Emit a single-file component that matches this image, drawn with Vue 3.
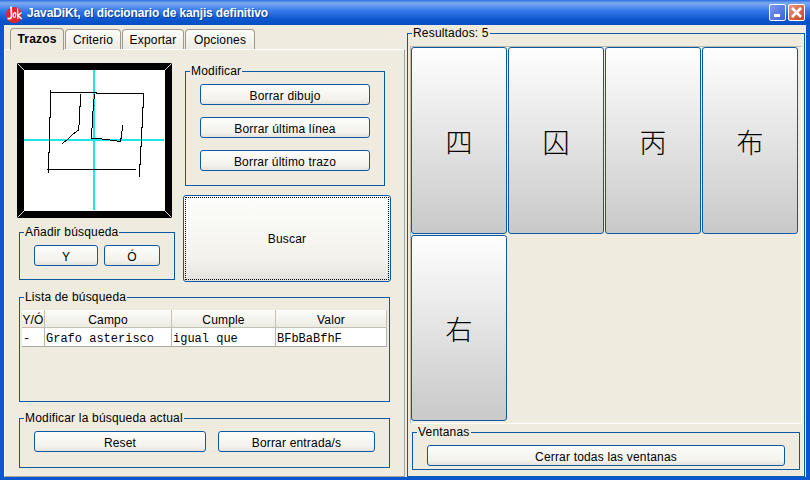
<template>
  <div class="window">
    <header class="titlebar">
      <svg class="logo" width="18" height="18" viewBox="0 0 18 18">
        <circle cx="9" cy="9" r="8" fill="#e8232f" />
        <path d="M6 0.5 L6.6 9.5 Q6.6 13.5 2.5 12.5" fill="none" stroke="#fff" stroke-width="1.7" />
        <path d="M10 6.5 Q8 7 8.2 10 Q8.6 12 10.2 11 Q11.2 9.5 10.6 7 Z" fill="none" stroke="#fff" stroke-width="1.1" />
        <path d="M12.6 2.5 L12.8 13 M16.5 6.5 L13 9.5 L16.8 13" fill="none" stroke="#fff" stroke-width="1.3" />
      </svg>
      <span class="title">JavaDiKt, el diccionario de kanjis definitivo</span>
      <div class="winbtn min"><span class="dash"></span></div>
      <div class="winbtn close">
        <svg width="15" height="15" viewBox="0 0 15 15">
          <path d="M3 3 L12 12 M12 3 L3 12" stroke="#fff" stroke-width="2.6" />
        </svg>
      </div>
    </header>

    <div class="body">
      <div class="left">
        <nav class="tabs">
          <div v-for="t in tabs" :key="t" class="tab" :class="{ active: t === 'Trazos' }">{{ t }}</div>
        </nav>

        <section class="pane">
          <div class="top">
            <div class="col-a">
              <svg class="canvas" width="155" height="155" viewBox="0 0 155 155">
                <rect width="155" height="155" fill="#000" />
                <rect x="7" y="7" width="141" height="141" fill="#fff" />
                <path d="M0.5 0.5 L7 7 M154.5 0.5 L148 7 M0.5 154.5 L7 148 M154.5 154.5 L148 148" stroke="#ddd" stroke-width="1" />
                <g fill="#1ce6e6">
                  <rect x="76" y="7" width="2" height="140" />
                  <rect x="7" y="76" width="140" height="2" />
                </g>
                <g fill="none" stroke="#000" stroke-width="1" shape-rendering="crispEdges">
                  <polyline v-for="(s, i) in strokes" :key="i" :points="s" />
                </g>
              </svg>

              <div class="group add">
                <span class="legend">Añadir búsqueda</span>
                <div class="row">
                  <button class="btn y">Y</button>
                  <button class="btn o">Ó</button>
                </div>
              </div>
            </div>

            <div class="col-b">
              <div class="group modify">
                <span class="legend">Modificar</span>
                <button class="btn">Borrar dibujo</button>
                <button class="btn">Borrar última línea</button>
                <button class="btn">Borrar último trazo</button>
              </div>
              <button class="btn search">Buscar</button>
            </div>
          </div>

          <div class="group list">
            <span class="legend">Lista de búsqueda</span>
            <table>
              <colgroup>
                <col style="width: 23px" />
                <col style="width: 127px" />
                <col style="width: 104px" />
                <col style="width: 111px" />
              </colgroup>
              <thead>
                <tr>
                  <th v-for="h in headers" :key="h">{{ h }}</th>
                </tr>
              </thead>
              <tbody>
                <tr>
                  <td v-for="c in cells" :key="c">{{ c }}</td>
                </tr>
              </tbody>
            </table>
          </div>

          <div class="group current">
            <span class="legend">Modificar la búsqueda actual</span>
            <button class="btn reset">Reset</button>
            <button class="btn remove">Borrar entrada/s</button>
          </div>
        </section>
      </div>

      <div class="group results">
        <span class="legend">Resultados: 5</span>
        <div class="scroll">
          <button v-for="k in kanjis" :key="k" class="btn kanji">{{ k }}</button>
        </div>
        <div class="group windows">
          <span class="legend">Ventanas</span>
          <button class="btn closeall">Cerrar todas las ventanas</button>
        </div>
      </div>
    </div>
  </div>
</template>

<script setup>
const tabs = ['Trazos', 'Criterio', 'Exportar', 'Opciones']
const headers = ['Y/Ó', 'Campo', 'Cumple', 'Valor']
const cells = ['-', 'Grafo asterisco', 'igual que', 'BFbBaBfhF']
const kanjis = ['四', '囚', '丙', '布', '右']

// Trazos dibujados a mano sobre el lienzo
const strokes = [
  '33.5,27 33.5,54 32.5,55 32.5,89 31.5,90 31.5,110',
  '33.5,29.5 79,29.5 79,30.5 126.5,30.5 126.5,44 125.5,45 125.5,64 124.5,65 124.5,83 123.5,84 123.5,101 122.5,102 122.5,114',
  '63.5,31 63.5,43 62.5,44 62.5,57 61.5,67 56,71 50,77 45,80.5',
  '77.5,31 76.5,42 75.5,55 74.5,75.5 80.5,75.5 89,76.5 97,77.5 103,78.5 104.5,74 105.5,62',
  '30,106.5 119,106.5'
]
</script>

<style>
html,
body {
  margin: 0;
  background: #efecdf;
  overflow: hidden;
}
</style>

<style scoped>
.window {
  box-sizing: border-box;
  width: 810px;
  height: 480px;
  display: flex;
  flex-direction: column;
  background: #efecdf;
  border: solid #0a55d0;
  border-width: 0 4px 3px;
  font-family: "Liberation Sans", Arial, sans-serif;
  font-size: 12px;
  letter-spacing: 0.18px;
  color: #000;
}

/* Barra de titulo */
.titlebar {
  flex: none;
  height: 25px;
  margin: 0 -4px;
  padding: 0 5px;
  display: flex;
  align-items: center;
  background: linear-gradient(#2a70e0 0, #7eaaf0 3px, #3a7cec 10px, #0a55cc 20px, #0650c4 25px);
}
.logo {
  flex: none;
  margin: 4px 4px 0 0;
  overflow: visible;
}
.title {
  flex: 1;
  color: #fff;
  font-weight: bold;
  font-size: 12px;
  letter-spacing: -0.13px;
  text-shadow: 1px 1px 0 #0a3a90;
}
.winbtn {
  box-sizing: border-box;
  width: 17px;
  height: 17px;
  margin-left: 2px;
  border: 1px solid #fff;
  border-radius: 2px;
  display: flex;
  align-items: center;
  justify-content: center;
}
.winbtn.min {
  background: linear-gradient(135deg, #7d9cf0, #3a60d8);
}
.dash {
  width: 6px;
  height: 3px;
  margin: 6px 2px 0 0;
  background: #fff;
}
.winbtn.close {
  background: linear-gradient(135deg, #ea9a80, #c8401c);
}

.body {
  flex: 1;
  display: flex;
  min-height: 0;
}
.left {
  flex: none;
  width: 401px;
  display: flex;
  flex-direction: column;
}

/* Pestanas */
.tabs {
  flex: none;
  height: 24px;
  padding: 3px 0 0 6px;
  box-sizing: border-box;
  display: flex;
  align-items: flex-end;
  gap: 1px;
}
.tab {
  box-sizing: border-box;
  height: 20px;
  padding: 3px 0 0;
  border: 1px solid #9c9a8c;
  border-bottom: none;
  border-radius: 4px 4px 0 0;
  background: linear-gradient(#fdfdfb, #ecebe3);
  text-align: center;
  position: relative;
}
.tab:nth-child(1) { width: 54px; }
.tab:nth-child(2) { width: 56px; }
.tab:nth-child(3) { width: 62px; }
.tab:nth-child(4) { width: 70px; }
.tab.active {
  height: 22px;
  margin-bottom: -1px;
  background: #efecdf;
  font-weight: bold;
  z-index: 1;
}

.pane {
  flex: 1;
  box-sizing: border-box;
  padding: 13px 0 0 12px;
  border: 1px solid #a8a598;
  border-top-color: #fff;
  border-left-color: #fff;
}

.top {
  display: flex;
  height: 218px;
}
.col-a {
  width: 158px;
  flex: none;
}
.canvas {
  display: block;
}
.col-b {
  margin-left: 8px;
  width: 208px;
  flex: none;
}

/* Grupos con titulo sobre el borde */
.group {
  box-sizing: border-box;
  position: relative;
  border: 1px solid #0a5aa8;
}
.legend {
  position: absolute;
  top: -8px;
  left: 4px;
  padding: 0 1px;
  background: #efecdf;
  line-height: 14px;
  white-space: nowrap;
}

/* Botones */
.btn {
  display: block;
  box-sizing: border-box;
  margin: 0;
  padding: 2px 0 0;
  border: 1px solid #0a5aa8;
  border-radius: 3px;
  background: linear-gradient(#fdfdfb, #f3f2ec 75%, #e4e2da);
  font: inherit;
  letter-spacing: inherit;
  color: #000;
}

.add {
  width: 156px;
  height: 48px;
  margin: 14px 0 0 2px;
  padding: 12px 0 0 14px;
}
.row {
  display: flex;
  gap: 6px;
}
.add .btn {
  height: 21px;
}
.y { width: 64px; }
.o { width: 56px; }

.modify {
  width: 200px;
  height: 115px;
  margin: 8px 0 0 2px;
  padding: 12px 0 0 14px;
}
.modify .btn {
  width: 170px;
  height: 21px;
  margin-bottom: 12px;
}
.search {
  width: 208px;
  height: 87px;
  margin-top: 9px;
  padding: 0;
  outline: 1px dotted #000;
  outline-offset: -3px;
}

.list {
  width: 371px;
  height: 105px;
  margin: 16px 0 0 2px;
  padding: 12px 0 0 2px;
}
table {
  width: 365px;
  table-layout: fixed;
  border-collapse: separate;
  border-spacing: 0;
}
th {
  box-sizing: border-box;
  height: 18px;
  padding: 2px 0 0;
  font-weight: normal;
  background: linear-gradient(#fdfdfb, #ecebe3);
  border-right: 1px solid #c4c1b4;
  border-bottom: 1px solid #c4c1b4;
}
td {
  box-sizing: border-box;
  height: 19px;
  padding: 3px 0 0 1px;
  background: #fff;
  border-right: 1px solid #b8b6ac;
  border-bottom: 1px solid #aaa89e;
  font-family: "Liberation Mono", monospace;
  font-size: 12px;
  line-height: 14px;
  letter-spacing: 0;
  white-space: nowrap;
  overflow: hidden;
}

.current {
  width: 371px;
  height: 50px;
  margin: 16px 0 0 2px;
  padding: 12px 0 0 14px;
  display: flex;
}
.current .btn {
  height: 21px;
}
.reset { width: 172px; }
.remove {
  width: 157px;
  margin-left: 12px;
}

/* Panel de resultados */
.results {
  flex: none;
  width: 398px;
  height: 444px;
  margin: 8px 0 0 2px;
}
.scroll {
  box-sizing: border-box;
  width: 392px;
  height: 378px;
  margin: 12px 0 0 2px;
  border: 1px solid #fff;
  border-top-color: #bdbab0;
  border-left-color: #bdbab0;
  display: grid;
  grid-template-columns: repeat(4, 96px);
  grid-template-rows: 187px 186px;
  gap: 1px;
  align-content: start;
}
.kanji {
  padding: 1px 0 0;
  background: linear-gradient(#fefefe, #c9c9c9);
  font-family: "Noto Sans CJK SC", sans-serif;
  font-weight: 300;
  font-size: 27px;
  letter-spacing: 0;
}
.windows {
  width: 388px;
  height: 38px;
  margin: 8px 0 0 4px;
  padding: 12px 0 0 14px;
}
.closeall {
  width: 358px;
  height: 21px;
}
</style>
